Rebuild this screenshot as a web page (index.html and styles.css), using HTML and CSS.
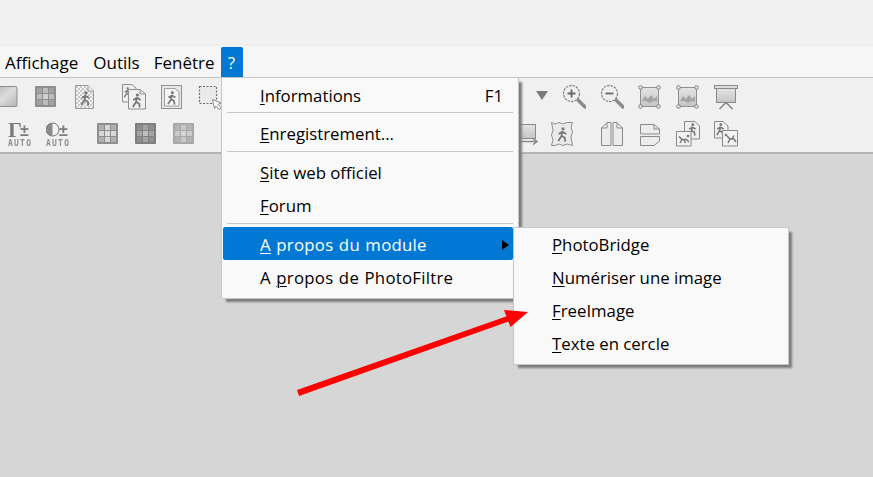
FILE: index.html
```html
<!DOCTYPE html>
<html lang="fr">
<head>
<meta charset="utf-8">
<title>PhotoFiltre</title>
<link rel="stylesheet" href="styles.css">
</head>
<body>
<svg class="defs" aria-hidden="true">
  <defs>
    <linearGradient id="gsq" x1="0" y1="0" x2="1" y2="1"><stop offset="0" stop-color="#b0b0b0"/><stop offset=".5" stop-color="#dcdcdc"/><stop offset="1" stop-color="#b4b4b4"/></linearGradient>
    <linearGradient id="gpic" x1="0" y1="0" x2="0" y2="1"><stop offset="0" stop-color="#e4e4e4"/><stop offset="1" stop-color="#c4c4c4"/></linearGradient>
    <pattern id="chk" width="4" height="4" patternUnits="userSpaceOnUse"><rect width="4" height="4" fill="#f4f4f4"/><rect width="2" height="2" fill="#c8c8c8"/><rect x="2" y="2" width="2" height="2" fill="#c8c8c8"/></pattern>
    <symbol id="runner" viewBox="0 0 12 16"><circle cx="7" cy="2" r="1.7" fill="#777"/><path d="M6.500 4.500 5.500 9.500 2 15M5.500 9.500 9 11.500 9.500 15.500M6.500 5 2.500 7.500M6.500 5 10.500 7.500" fill="none" stroke="#777" stroke-width="1.900"/></symbol>
    <symbol id="i-grid" viewBox="0 0 24 26"><rect x="1" y="2" width="21" height="21" rx="1" class="gf"/><rect x="3" y="4" width="5" height="5" class="c1"/><rect x="9" y="4" width="5" height="5" class="c2"/><rect x="15" y="4" width="5" height="5" class="c1"/><rect x="3" y="10" width="5" height="5" class="c2"/><rect x="9" y="10" width="5" height="5" class="c3"/><rect x="15" y="10" width="5" height="5" class="c2"/><rect x="3" y="16" width="5" height="5" class="c1"/><rect x="9" y="16" width="5" height="5" class="c2"/><rect x="15" y="16" width="5" height="5" class="c1"/></symbol>
    <symbol id="i-grad" viewBox="0 0 24 26"><rect x="-2" y="2.500" width="25" height="20" rx="1" fill="url(#gsq)" stroke="#8f8f8f"/></symbol>
    <symbol id="i-check" viewBox="0 0 24 26"><path d="M1.500 1.500H14L19.500 7V24.500H1.500Z" fill="url(#chk)" stroke="#9a9a9a"/><path d="M14 1.500V7H19.500" fill="#eee" stroke="#9a9a9a"/><use href="#runner" x="5" y="7" width="12" height="15"/></symbol>
    <symbol id="i-dbl" viewBox="0 0 24 26"><path d="M.5.500H10L14 4V18H.5Z" fill="#eee" stroke="#8f8f8f"/><use href="#runner" x="1" y="3" width="8" height="11"/><path d="M6.500 5.500H18L23.500 10V25H6.500Z" fill="#f0f0f0" stroke="#8f8f8f"/><path d="M18 5.500V10H23.500" fill="none" stroke="#8f8f8f"/><use href="#runner" x="9" y="9" width="11" height="15"/></symbol>
    <symbol id="i-frame" viewBox="0 0 24 26"><rect x="1.500" y="1.500" width="20" height="23" fill="#e6e6e6" stroke="#929292"/><path d="M4.500 4.500H15L19 8V22H4.500Z" fill="#f4f4f4" stroke="#a0a0a0"/><use href="#runner" x="6" y="7" width="11" height="14"/></symbol>
    <symbol id="i-sel" viewBox="0 0 24 26"><rect x="1.500" y="2.500" width="17" height="17" fill="#eaeaea" stroke="#6f6f6f" stroke-width="1.200" stroke-dasharray="2 1.500"/><path d="M14.500 15.500 23 19 20 20.500 23.500 24 21 25.500 18 22 16.500 24.500Z" fill="#fafafa" stroke="#8a8a8a"/></symbol>
    <symbol id="i-tri" viewBox="0 0 24 26"><path d="M12 7H24L18 16Z" fill="#7a7a7a"/></symbol>
    <symbol id="i-zp" viewBox="0 0 24 26"><path d="M15 15 23 23" stroke="#8c8c8c" stroke-width="3.500" stroke-linecap="round"/><circle cx="9.500" cy="9.500" r="8" fill="#efefef" stroke="#8a8a8a" stroke-width="1.300" stroke-dasharray="2.500 1"/><path d="M5.500 9.500H13.500M9.500 5.500V13.500" stroke="#666" stroke-width="1.800"/></symbol>
    <symbol id="i-zm" viewBox="0 0 24 26"><path d="M15 15 23 23" stroke="#8c8c8c" stroke-width="3.500" stroke-linecap="round"/><circle cx="9.500" cy="9.500" r="8" fill="#efefef" stroke="#8a8a8a" stroke-width="1.300" stroke-dasharray="2.500 1"/><path d="M5.500 9.500H13.500" stroke="#666" stroke-width="1.800"/></symbol>
    <symbol id="i-pic" viewBox="0 0 24 26"><rect x="2.500" y="3.500" width="18" height="19" fill="url(#gpic)" stroke="#8f8f8f"/><path d="M4 17 7 12 10 15 13 11 16 15 19 12V18L16 17 12 19 8 17Z" fill="#a4a4a4"/><g fill="#e8e8e8" stroke="#7f7f7f"><circle cx="2.500" cy="3.500" r="1.800"/><circle cx="20.500" cy="3.500" r="1.800"/><circle cx="2.500" cy="22.500" r="1.800"/><circle cx="20.500" cy="22.500" r="1.800"/></g></symbol>
    <symbol id="i-proj" viewBox="0 0 24 26"><rect x=".5" y="1.500" width="23" height="3" fill="#dcdcdc" stroke="#8a8a8a"/><rect x="2.500" y="4.500" width="19" height="14" fill="url(#gpic)" stroke="#8a8a8a"/><path d="M12 18.500 5.500 25M12 18.500 18.500 25" fill="none" stroke="#7f7f7f" stroke-width="1.400"/></symbol>
    <symbol id="i-mon" viewBox="0 0 24 26"><rect x="3.500" y="3.500" width="18" height="14" fill="url(#gpic)" stroke="#8a8a8a"/><path d="M4 20.500H22M19 17.500 23 20.500 19 23.500" fill="none" stroke="#8a8a8a" stroke-width="1.500"/></symbol>
    <symbol id="i-stamp" viewBox="0 0 24 26"><path d="M1.500 1.500 5 3 9 1.500 13 3 17 1.500 22.500 1.500 21 6 22.500 11 21 16 22.500 24.500 17 23 13 24.500 9 23 5 24.500 1.500 24.500 3 19 1.500 14 3 9Z" fill="#eaeaea" stroke="#8f8f8f"/><use href="#runner" x="6" y="6" width="12" height="15"/></symbol>
    <symbol id="i-pages" viewBox="0 0 24 26"><path d="M1.500 7 7 1.500H11V24.500H1.500Z" fill="#ececec" stroke="#8a8a8a"/><path d="M1.500 7H7V1.500" fill="none" stroke="#8a8a8a"/><path d="M22.500 7 17 1.500H13V24.500H22.500Z" fill="#ececec" stroke="#8a8a8a"/><path d="M22.500 7H17V1.500" fill="none" stroke="#8a8a8a"/></symbol>
    <symbol id="i-stack" viewBox="0 0 24 26"><path d="M2.500 3.500H16L21.500 8V13H2.500Z" fill="#ececec" stroke="#8a8a8a"/><path d="M16 3.500V8H21.500" fill="none" stroke="#8a8a8a"/><path d="M2.500 15.500H21.500V20L16 24.500H2.500Z" fill="#ececec" stroke="#8a8a8a"/></symbol>
    <symbol id="i-ph1" viewBox="0 0 24 26"><path d="M8.500 .500H19L23.500 5V18H8.500Z" fill="#efefef" stroke="#8a8a8a"/><use href="#runner" x="11" y="2" width="10" height="13"/><path d="M.5 10.500H15V25H.5Z" fill="#f2f2f2" stroke="#8a8a8a"/><circle cx="12" cy="15" r="1.300" fill="#777"/><path d="M3 15.500 6 18.500 4 22M6 18.500H10.500L13 21M8 18.500 9.500 22" fill="none" stroke="#777" stroke-width="1.500"/></symbol>
    <symbol id="i-ph2" viewBox="0 0 24 26"><path d="M.5.500H9L14 5V17H.5Z" fill="#efefef" stroke="#8a8a8a"/><use href="#runner" x="1" y="2" width="10" height="13"/><path d="M8.500 9.500H23.500V25H8.500Z" fill="#f2f2f2" stroke="#8a8a8a"/><circle cx="12" cy="14" r="1.300" fill="#777"/><path d="M13 15 16 18H20L22 21M16 18 14 22M18 18 20 14.500" fill="none" stroke="#777" stroke-width="1.500"/></symbol>
    <symbol id="i-gam" viewBox="0 0 24 26"><text x="0" y="16" class="glyph-gamma">Γ</text><text x="12" y="15" class="glyph-pm">±</text><text x="0" y="25" class="glyph-auto" textLength="23">AUTO</text></symbol>
    <symbol id="i-con" viewBox="0 0 24 26"><circle cx="6.500" cy="8.500" r="6.500" fill="#f4f4f4" stroke="#777"/><path d="M6.500 2a6.500 6.500 0 0 0 0 13Z" fill="#8a8a8a"/><text x="13" y="15" class="glyph-pm">±</text><text x="0" y="25" class="glyph-auto" textLength="23">AUTO</text></symbol>
  </defs>
</svg>

<div class="app">
  <div class="titlebar"></div>
  <nav class="menubar">
    <span class="menubar-item">Affichage</span>
    <span class="menubar-item">Outils</span>
    <span class="menubar-item">Fenêtre</span>
    <span class="menubar-item is-open">?</span>
  </nav>
  <div class="toolbar">
    <div class="tool-row">
      <div class="group g-a1"><svg class="ico"><use href="#i-grad"/></svg><svg class="ico grid-base"><use href="#i-grid"/></svg><svg class="ico"><use href="#i-check"/></svg></div>
      <div class="group g-a2"><svg class="ico"><use href="#i-dbl"/></svg><svg class="ico"><use href="#i-frame"/></svg><svg class="ico"><use href="#i-sel"/></svg></div>
      <div class="group g-a3"><svg class="ico"><use href="#i-tri"/></svg><svg class="ico"><use href="#i-zp"/></svg><svg class="ico"><use href="#i-zm"/></svg><svg class="ico"><use href="#i-pic"/></svg><svg class="ico"><use href="#i-pic"/></svg><svg class="ico"><use href="#i-proj"/></svg></div>
    </div>
    <div class="tool-row">
      <div class="group g-b1"><svg class="ico"><use href="#i-gam"/></svg><svg class="ico"><use href="#i-con"/></svg></div>
      <div class="group g-b2"><svg class="ico grid-light"><use href="#i-grid"/></svg><svg class="ico grid-dark"><use href="#i-grid"/></svg><svg class="ico grid-pale"><use href="#i-grid"/></svg></div>
      <div class="group g-b3"><svg class="ico"><use href="#i-mon"/></svg><svg class="ico"><use href="#i-stamp"/></svg></div>
      <div class="group g-b4"><svg class="ico"><use href="#i-pages"/></svg><svg class="ico"><use href="#i-stack"/></svg><svg class="ico"><use href="#i-ph1"/></svg><svg class="ico"><use href="#i-ph2"/></svg></div>
    </div>
  </div>
  <main class="canvas"></main>

  <div class="menu menu-main">
    <div class="item"><span><u>I</u>nformations</span><span class="key">F1</span></div>
    <div class="sep sep-first"></div>
    <div class="item"><span><u>E</u>nregistrement...</span></div>
    <div class="sep"></div>
    <div class="item"><span><u>S</u>ite web officiel</span></div>
    <div class="item"><span><u>F</u>orum</span></div>
    <div class="sep"></div>
    <div class="item is-active"><span class="spaced"><u>A</u> propos du module</span><span class="caret"></span></div>
    <div class="item"><span class="spaced">A <u>p</u>ropos de PhotoFiltre</span></div>
  </div>

  <div class="menu menu-sub">
    <div class="item"><span><u>P</u>hotoBridge</span></div>
    <div class="item"><span><u>N</u>umériser une image</span></div>
    <div class="item"><span><u>F</u>reeImage</span></div>
    <div class="item"><span><u>T</u>exte en cercle</span></div>
  </div>

  <svg class="arrow" width="873" height="477" viewBox="0 0 873 477" aria-hidden="true">
    <path d="M297 390 507.500 316 510 321 299 396Z" fill="#ff0000"/>
    <path d="M504 310 528 312 510.500 327Z" fill="#ff0000"/>
  </svg>
</div>
</body>
</html>
```
FILE: styles.css
```css
* { box-sizing: border-box; }
html, body { margin: 0; height: 100%; }
body { font-family: "Open Sans", "Liberation Sans", sans-serif; color: #000; overflow: hidden; }
.defs { position: absolute; width: 0; height: 0; }

.app { position: relative; width: 873px; height: 477px; display: flex; flex-direction: column; overflow: hidden; background: #d6d6d6; }
.titlebar { height: 47px; background: #f1f1f1; }

.menubar { height: 30px; background: #f6f6f6; display: flex; align-items: stretch; padding-left: 5px; font-size: 17px; }
.menubar-item { display: flex; align-items: center; padding-top: 1px; margin-right: 14px; }
.menubar-item:first-child { margin-right: 15px; }
.menubar-item.is-open { margin-left: -8px; width: 22px; justify-content: center; background: #0078d4; color: #fff; border-radius: 2px 2px 0 0; margin-right: 0; }

.toolbar { height: 77px; background: #f0f0f0; border-top: 1px solid #c4c4c4; border-bottom: 2px solid #b4b4b4; padding-top: 6px; display: flex; flex-direction: column; gap: 11px; }
.tool-row { display: flex; height: 26px; }
.group { display: flex; gap: 14px; flex: none; }
.ico { width: 24px; height: 26px; flex: none; filter: blur(.4px); overflow: visible; }
.g-a1 { gap: 16px; margin-left: -6px; }
.g-a2 { margin-left: 24px; }
.g-a3 { margin-left: 302px; }
.g-b1 { margin-left: 8px; }
.g-b2 { margin-left: 26px; }
.g-b3 { margin-left: 318px; gap: 12px; }
.g-b4 { margin-left: 26px; }

.grid-base { --f: #8e8e8e; --a: #a2a2a2; --b: #bcbcbc; --c: #d0d0d0; }
.grid-light { --f: #8e8e8e; --a: #b0b0b0; --b: #d8d8d8; --c: #dedede; }
.grid-dark { --f: #7f7f7f; --a: #8f8f8f; --b: #a4a4a4; --c: #c0c0c0; }
.grid-pale { --f: #a8a8a8; --a: #b4b4b4; --b: #cacaca; --c: #d4d4d4; }
.gf { fill: var(--f); }
.c1 { fill: var(--a); }
.c2 { fill: var(--b); }
.c3 { fill: var(--c); }

.glyph-gamma { font-family: "Liberation Serif", serif; font-weight: 700; font-size: 22px; fill: #7a7a7a; }
.glyph-pm { font-family: "Liberation Sans", sans-serif; font-weight: 700; font-size: 16px; fill: #7a7a7a; }
.glyph-auto { font-family: "DejaVu Sans Mono", monospace; font-weight: 700; font-size: 8px; fill: #8f8f8f; }

.canvas { flex: 1; background: #d6d6d6; }

.menu { position: absolute; background: #f9f9f9; border: 1px solid #c6c6c6; box-shadow: 4px 4px 2px -1px #7c7c7c; font-size: 16.8px; }
.menu-main { left: 221px; top: 77px; width: 298px; height: 222px; padding: 0 1px; }
.menu-sub { left: 513px; top: 227px; width: 276px; height: 138px; z-index: 2; }
.item { height: 33px; display: flex; align-items: center; justify-content: space-between; padding: 2px 14px 0 37px; white-space: nowrap; }
.menu-sub .item { padding: 0 0 0 38px; }
.item u { text-underline-offset: 2px; text-decoration-thickness: 1px; }
.item.is-active { background: #0078d4; color: #fff; border-radius: 2px; padding-right: 4px; margin-right: 4px; }
.spaced { word-spacing: .8px; letter-spacing: .26px; }
.sep { height: 6px; margin: 0 4px; padding-top: 2px; }
.sep::before { content: ""; display: block; height: 1px; background: #c8c8c8; }
.sep-first { height: 5px; padding-top: 1px; }
.caret { width: 0; height: 0; border-left: 7px solid #000; border-top: 5px solid transparent; border-bottom: 5px solid transparent; }

.arrow { position: absolute; left: 0; top: 0; z-index: 3; pointer-events: none; }
```
